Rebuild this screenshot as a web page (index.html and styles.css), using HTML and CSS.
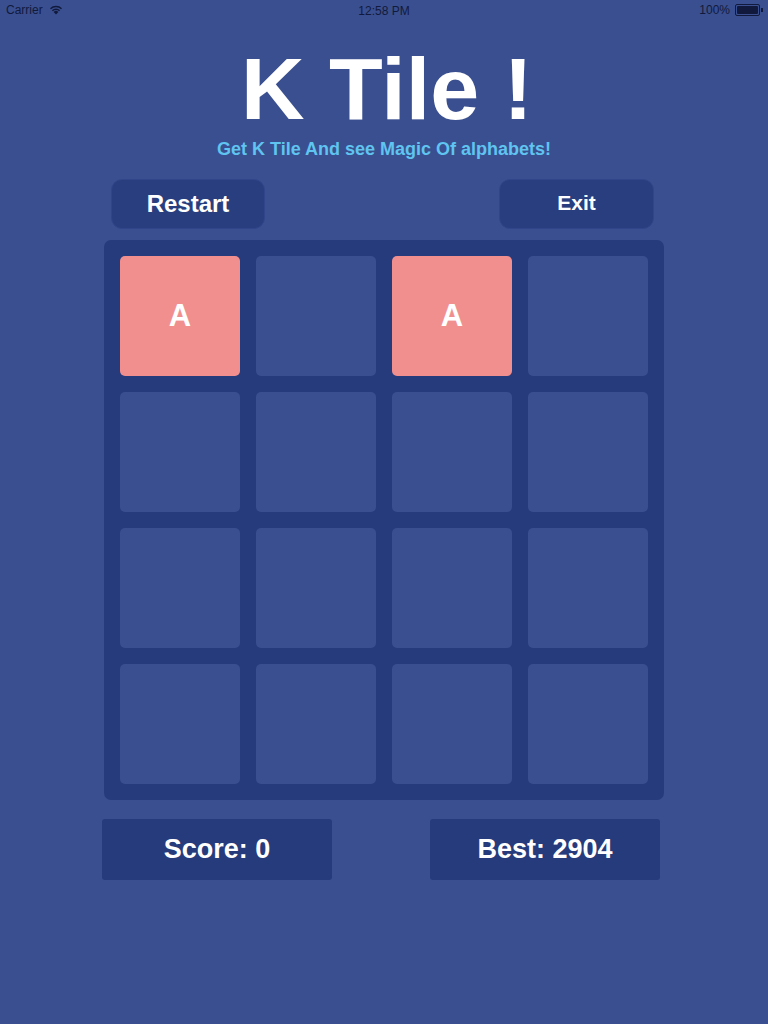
FILE: index.html
```html
<!DOCTYPE html>
<html>
<head>
<meta charset="utf-8">
<link rel="stylesheet" href="styles.css">
</head>
<body>
<div class="status">
  <div class="status-left">
    <span>Carrier</span>
    <svg class="wifi" width="14" height="10" viewBox="0 0 14 10">
      <path d="M7 9.5 L4.6 6.9 A3.4 3.4 0 0 1 9.4 6.9 Z" fill="#111a3c"/>
      <path d="M2.9 5.2 A5.8 5.8 0 0 1 11.1 5.2 L10.1 6.2 A4.4 4.4 0 0 0 3.9 6.2 Z" fill="#111a3c"/>
      <path d="M1 3.3 A8.5 8.5 0 0 1 13 3.3 L12 4.3 A7.1 7.1 0 0 0 2 4.3 Z" fill="#111a3c"/>
    </svg>
  </div>
  <div class="status-mid">12:58 PM</div>
  <div class="status-right">
    <span>100%</span>
    <span class="battery"><span class="battery-fill"></span></span><span class="battery-tip"></span>
  </div>
</div>

<h1 class="title">K Tile !</h1>
<p class="subtitle">Get K Tile And see Magic Of alphabets!</p>

<div class="controls">
  <div class="btn btn-restart">Restart</div>
  <div class="btn btn-exit">Exit</div>
</div>

<div class="board">
  <div class="tile filled">A</div>
  <div class="tile"></div>
  <div class="tile filled">A</div>
  <div class="tile"></div>
  <div class="tile"></div>
  <div class="tile"></div>
  <div class="tile"></div>
  <div class="tile"></div>
  <div class="tile"></div>
  <div class="tile"></div>
  <div class="tile"></div>
  <div class="tile"></div>
  <div class="tile"></div>
  <div class="tile"></div>
  <div class="tile"></div>
  <div class="tile"></div>
</div>

<div class="scores">
  <div class="score-box">Score: 0</div>
  <div class="score-box">Best: 2904</div>
</div>
</body>
</html>
```

FILE: styles.css
```css
html, body {
  margin: 0;
  padding: 0;
}
body {
  width: 768px;
  height: 1024px;
  background: #3a4f8f;
  font-family: "Liberation Sans", Arial, sans-serif;
  color: #ffffff;
  overflow: hidden;
}
.status {
  height: 20px;
  display: flex;
  align-items: center;
  justify-content: space-between;
  padding: 0 5px 0 6px;
  font-size: 12px;
  color: #111a3c;
  position: relative;
}
.status-left {
  display: flex;
  align-items: center;
  gap: 6px;
}
.wifi {
  margin-top: -1px;
}
.status-mid {
  position: absolute;
  left: 0;
  right: 0;
  text-align: center;
  top: 4px;
}
.status-right {
  display: flex;
  align-items: center;
}
.battery {
  margin-left: 5px;
  width: 21px;
  height: 8px;
  border: 1px solid #111a3c;
  border-radius: 2px;
  padding: 1px;
  box-sizing: content-box;
  display: flex;
}
.battery-fill {
  flex: 1;
  background: #111a3c;
  border-radius: 1px;
}
.battery-tip {
  width: 2px;
  height: 4px;
  background: #111a3c;
  margin-left: 1px;
}
.title {
  margin: 25px 0 0 0;
  font-size: 88px;
  line-height: 88px;
  font-weight: bold;
  text-align: center;
  padding-left: 6px;
}
.subtitle {
  margin: 6px 0 0 0;
  font-size: 18px;
  line-height: 20px;
  font-weight: bold;
  text-align: center;
  color: #5fc4f0;
}
.controls {
  margin: 20px 0 0 111px;
  width: 543px;
  display: flex;
  justify-content: space-between;
}
.btn {
  width: 154px;
  height: 50px;
  box-sizing: border-box;
  background: #283e7e;
  border: 1px solid #31468a;
  border-radius: 11px;
  display: flex;
  align-items: center;
  justify-content: center;
  font-weight: bold;
}
.btn-restart {
  font-size: 24px;
}
.btn-exit {
  width: 155px;
  font-size: 21px;
  padding-bottom: 3px;
}
.board {
  margin: 11px 0 0 104px;
  width: 560px;
  height: 560px;
  box-sizing: border-box;
  padding: 16px;
  background: #263b7b;
  border-radius: 7px;
  display: grid;
  grid-template-columns: repeat(4, 120px);
  grid-template-rows: repeat(4, 120px);
  gap: 16px;
}
.tile {
  background: #3a4f8f;
  border-radius: 5px;
  display: flex;
  align-items: center;
  justify-content: center;
  font-size: 31px;
  font-weight: bold;
}
.tile.filled {
  background: #f18f8f;
}
.scores {
  margin: 19px 0 0 102px;
  width: 558px;
  display: flex;
  justify-content: space-between;
}
.score-box {
  width: 230px;
  height: 61px;
  background: #263b7b;
  border-radius: 3px;
  display: flex;
  align-items: center;
  justify-content: center;
  font-size: 27px;
  font-weight: bold;
}
```
